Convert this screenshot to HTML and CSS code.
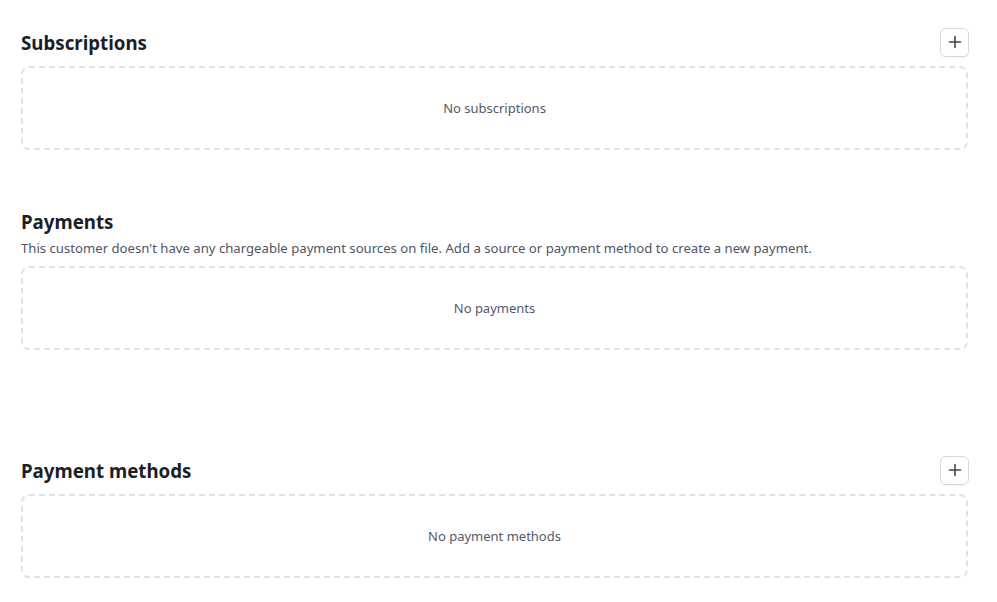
FILE: index.html
```html
<!DOCTYPE html>
<html lang="en">
<head>
<meta charset="utf-8">
<title>Customer</title>
<link rel="stylesheet" href="styles.css">
</head>
<body>
<main class="page">
  <section class="section first">
    <div class="header">
      <h2 class="title">Subscriptions</h2>
      <button class="add" type="button" aria-label="Add subscription">
        <svg width="14" height="14" viewBox="0 0 14 14"><path d="M7 1.5v11M1.5 7h11" stroke="#414552" stroke-width="1.6" stroke-linecap="round" fill="none"/></svg>
      </button>
    </div>
    <div class="empty">No subscriptions</div>
  </section>

  <section class="section second">
    <div class="header">
      <h2 class="title">Payments</h2>
    </div>
    <p class="desc">This customer doesn't have any chargeable payment sources on file. Add a source or payment method to create a new payment.</p>
    <div class="empty">No payments</div>
  </section>

  <section class="section third">
    <div class="header">
      <h2 class="title">Payment methods</h2>
      <button class="add" type="button" aria-label="Add payment method">
        <svg width="14" height="14" viewBox="0 0 14 14"><path d="M7 1.5v11M1.5 7h11" stroke="#414552" stroke-width="1.6" stroke-linecap="round" fill="none"/></svg>
      </button>
    </div>
    <div class="empty">No payment methods</div>
  </section>
</main>
</body>
</html>
```

FILE: styles.css
```css
html, body {
  margin: 0;
  padding: 0;
  background: #ffffff;
}
body {
  font-family: "Noto Sans", "Open Sans", "Liberation Sans", sans-serif;
  color: #1a1b25;
}
.page {
  padding: 27px 29px 0 21px;
  display: flex;
  flex-direction: column;
}
.section {
  display: flex;
  flex-direction: column;
}
.second { margin-top: 56px; }
.third { margin-top: 105px; }
.header {
  height: 30px;
  display: flex;
  align-items: center;
  justify-content: space-between;
}
.title {
  margin: 2px 0 0;
  font-size: 18.7px;
  font-weight: 700;
  line-height: 28px;
  color: #1a1f27;
}
.add {
  width: 29px;
  height: 29px;
  margin-right: -1px;
  padding: 0;
  border: 1px solid #d5d8de;
  border-radius: 6px;
  background: #ffffff;
  display: flex;
  align-items: center;
  justify-content: center;
  box-shadow: 0 1px 1px rgba(0,0,0,0.04);
}
.desc {
  margin: 2px 0 0;
  font-size: 13.15px;
  line-height: 20px;
  color: #4f5565;
}
.empty {
  margin-top: 8px;
  height: 84px;
  box-sizing: border-box;
  border: 2px dashed #dfe2e6;
  border-radius: 8px;
  display: flex;
  align-items: center;
  justify-content: center;
  font-size: 13px;
  color: #545969;
}
.first .empty, .third .empty { margin-top: 9px; }
```
